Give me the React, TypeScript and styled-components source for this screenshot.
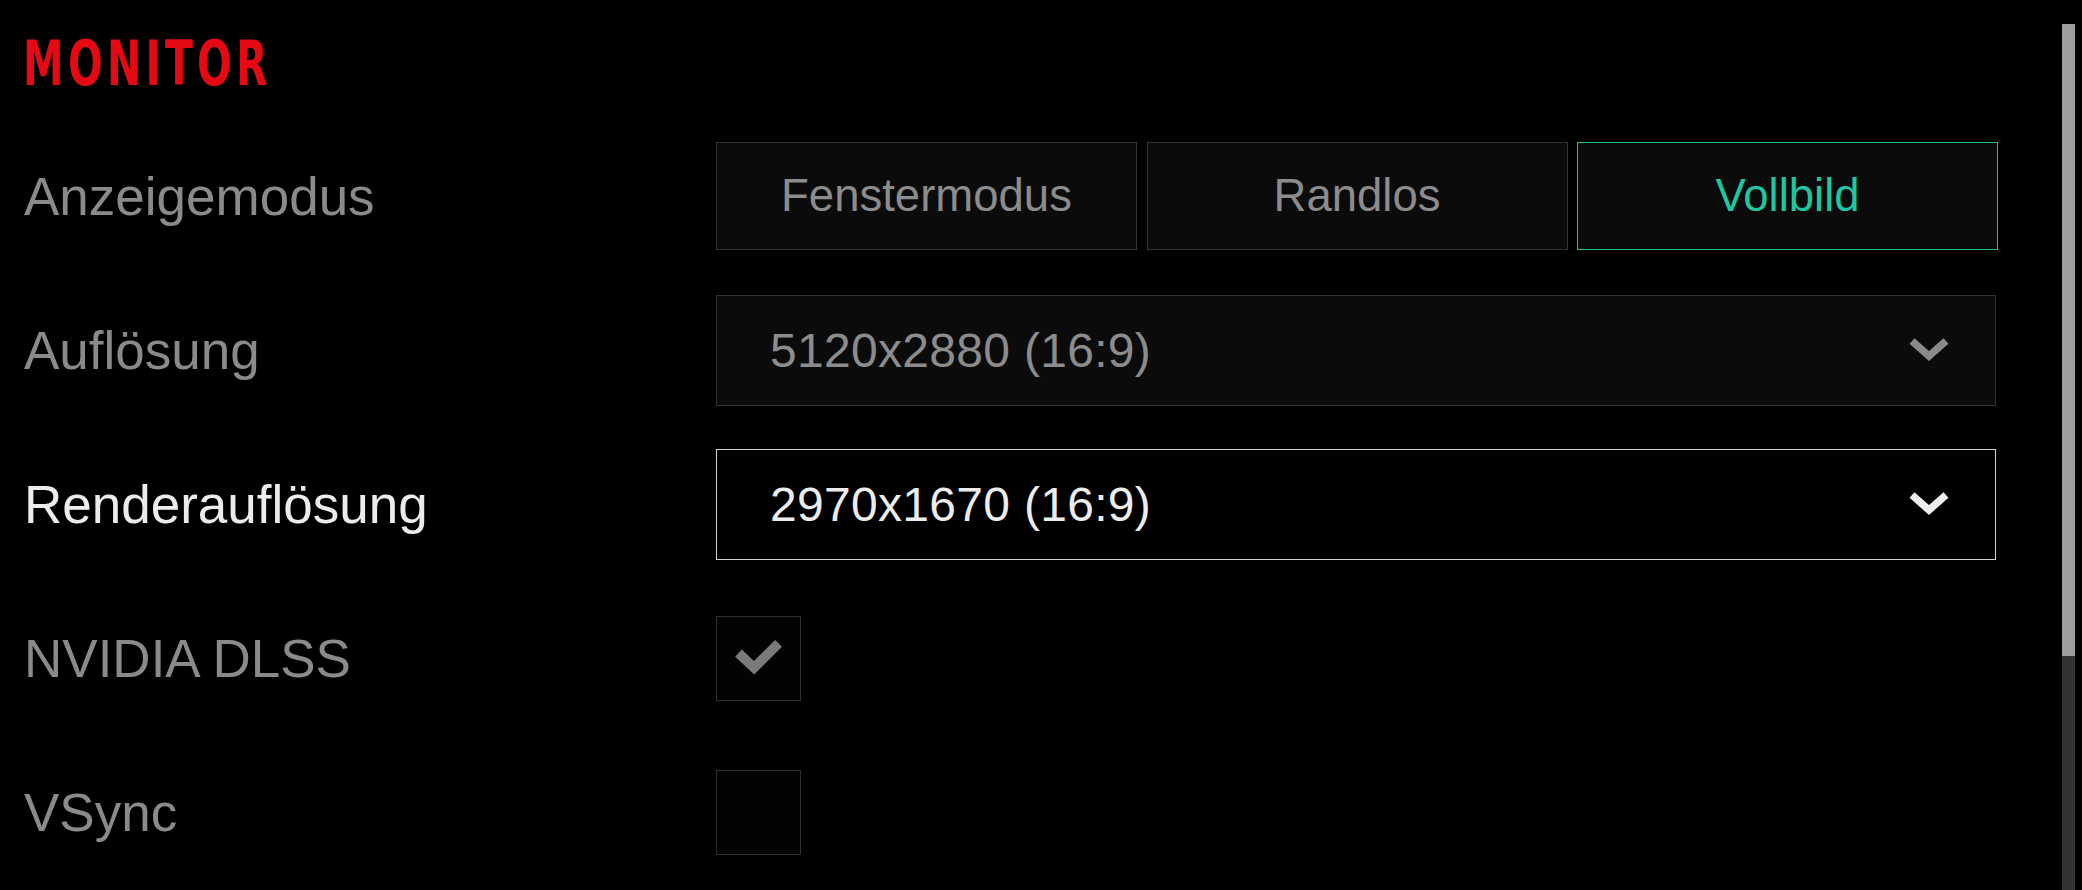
import React from "react";
import styled, { createGlobalStyle } from "styled-components";

const GlobalStyle = createGlobalStyle`
  html, body {
    margin: 0;
    padding: 0;
    background: #000;
    overflow: hidden;
  }
  body {
    font-family: "Liberation Sans", Arial, sans-serif;
  }
  * { box-sizing: border-box; }
`;

const Page = styled.div`
  display: flex;
  width: 2082px;
  height: 890px;
  background: #000;
  overflow: hidden;
`;

const Main = styled.main`
  flex: 1;
  min-width: 0;
  padding: 32px 0 0 20px;
`;

const Heading = styled.h1`
  margin: 0 0 24px 3px;
  height: 63px;
  font-family: "Liberation Sans Narrow", "DejaVu Sans Condensed", "Liberation Sans", sans-serif;
  font-weight: 700;
  font-size: 63px;
  line-height: 63px;
  letter-spacing: 6px;
  color: #e50914;
  transform: scaleX(0.72);
  transform-origin: left center;
  white-space: nowrap;
`;

const Rows = styled.div`
  display: flex;
  flex-direction: column;
`;

const Row = styled.div`
  display: grid;
  grid-template-columns: 696px 1282px;
  align-items: center;
  height: 154px;
`;

const Label = styled.div<{ $active?: boolean }>`
  padding-left: 4px;
  font-size: 53px;
  color: ${(p) => (p.$active ? "#ececec" : "#8a8a8a")};
  white-space: nowrap;
`;

const Segments = styled.div`
  display: grid;
  grid-template-columns: repeat(3, 1fr);
  gap: 9.5px;
`;

const Segment = styled.button<{ $selected?: boolean }>`
  height: 108px;
  background: #0b0b0b;
  border: 1px solid ${(p) => (p.$selected ? "#25b996" : "#333")};
  color: ${(p) => (p.$selected ? "#1fc7a1" : "#8c8c8c")};
  font-family: "Liberation Sans", Arial, sans-serif;
  font-size: 45.5px;
  padding: 0;
  cursor: pointer;
`;

const Select = styled.div<{ $focused?: boolean }>`
  display: flex;
  align-items: center;
  justify-content: space-between;
  width: 1280px;
  height: 111px;
  padding: 0 46px 0 53px;
  background: ${(p) => (p.$focused ? "#000" : "#0b0b0b")};
  border: 1px solid ${(p) => (p.$focused ? "#d4d4d4" : "#333")};
  color: ${(p) => (p.$focused ? "#ececec" : "#8c8c8c")};
  font-size: 48px;
  letter-spacing: 0.3px;
`;

const Chevron = styled.svg`
  width: 40px;
  height: 26px;
  display: block;
`;

const Checkbox = styled.div`
  width: 85px;
  height: 85px;
  background: #030303;
  border: 1px solid #2f2f2f;
  display: flex;
  align-items: center;
  justify-content: center;
`;

const CheckMark = styled.svg`
  width: 85px;
  height: 85px;
  display: block;
`;

const Scrollbar = styled.div`
  width: 13px;
  margin: 24px 7px 0 0;
  background: #333;
  display: flex;
  flex-direction: column;
`;

const Thumb = styled.div`
  height: 632px;
  background: #9d9d9d;
`;

const ChevronIcon = ({ color }: { color: string }) => (
  <Chevron viewBox="0 0 40 26">
    <polyline points="3,4 20,19 37,4" fill="none" stroke={color} strokeWidth="7.5" />
  </Chevron>
);

export default function App() {
  return (
    <>
      <GlobalStyle />
      <Page>
        <Main>
          <Heading>MONITOR</Heading>
          <Rows>
            <Row>
              <Label>Anzeigemodus</Label>
              <Segments>
                <Segment>Fenstermodus</Segment>
                <Segment>Randlos</Segment>
                <Segment $selected>Vollbild</Segment>
              </Segments>
            </Row>
            <Row>
              <Label>Auflösung</Label>
              <Select>
                <span>5120x2880 (16:9)</span>
                <ChevronIcon color="#8a8a8a" />
              </Select>
            </Row>
            <Row>
              <Label $active>Renderauflösung</Label>
              <Select $focused>
                <span>2970x1670 (16:9)</span>
                <ChevronIcon color="#eeeeee" />
              </Select>
            </Row>
            <Row>
              <Label>NVIDIA DLSS</Label>
              <Checkbox>
                <CheckMark viewBox="0 0 85 85">
                  <polyline points="22,37 38,52 63,27" fill="none" stroke="#7a7a7a" strokeWidth="10" />
                </CheckMark>
              </Checkbox>
            </Row>
            <Row>
              <Label>VSync</Label>
              <Checkbox />
            </Row>
          </Rows>
        </Main>
        <Scrollbar>
          <Thumb />
        </Scrollbar>
      </Page>
    </>
  );
}
